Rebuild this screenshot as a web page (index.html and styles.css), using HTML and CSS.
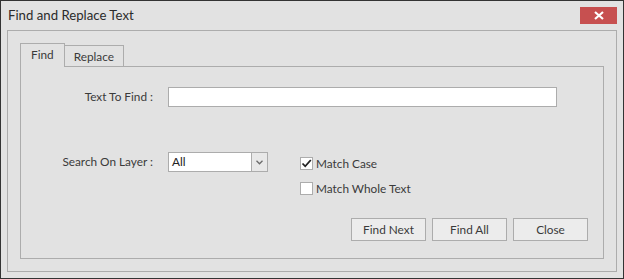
FILE: index.html
```html
<!DOCTYPE html>
<html lang="en">
<head>
  <meta charset="UTF-8">
  <title>Find and Replace Text</title>
  <link rel="stylesheet" href="styles.css">
</head>
<body>
  <div class="window">
    <div class="titlebar">
      <span class="title">Find and Replace Text</span>
      <button class="close-x" aria-label="Close">
        <svg width="10" height="9" viewBox="0 0 10 9"><path d="M1 1 L9 8 M9 1 L1 8" stroke="#fff" stroke-width="2.2"/></svg>
      </button>
    </div>

    <div class="group">
      <div class="tabs">
        <div class="tab active">Find</div>
        <div class="tab">Replace</div>
      </div>
      <div class="page">
        <div class="row row-find">
          <label class="lbl">Text To Find :</label>
          <input class="text-input" type="text">
        </div>

        <div class="row row-layer">
          <label class="lbl">Search On Layer :</label>
          <div class="combo">
            <span class="combo-value">All</span>
            <span class="combo-btn">
              <svg width="7" height="5" viewBox="0 0 7 5"><path d="M0.5 0.8 L3.5 3.8 L6.5 0.8" fill="none" stroke="#6b6b6b" stroke-width="1.3"/></svg>
            </span>
          </div>
          <div class="checks">
            <label class="check">
              <span class="box">
                <svg width="11" height="11" viewBox="0 0 11 11"><path d="M1.5 5.5 L4.2 8.3 L9.8 2" fill="none" stroke="#222" stroke-width="1.8"/></svg>
              </span>
              Match Case
            </label>
            <label class="check">
              <span class="box"></span>
              Match Whole Text
            </label>
          </div>
        </div>

        <div class="buttons">
          <button class="btn">Find Next</button>
          <button class="btn">Find All</button>
          <button class="btn">Close</button>
        </div>
      </div>
    </div>
  </div>
</body>
</html>
```

FILE: styles.css
```css
* { box-sizing: border-box; }
body {
  margin: 0;
  font-family: Lato, 'Noto Sans', sans-serif;
  font-size: 11.8px;
  color: #3a3a3a;
  background: #e2e2e2;
}
.window {
  width: 624px; height: 279px;
  border: 1px solid #333;
  background: #e2e2e2;
  padding: 0 6px 6px;
  display: flex; flex-direction: column;
}
.titlebar {
  height: 29px;
  display: flex; align-items: flex-start; justify-content: space-between;
}
.title {
  font-size: 13.2px; color: #2b2b2b;
  margin: 6px 0 0 1px;
}
.close-x {
  width: 37px; height: 17px; margin-top: 6px; margin-right: 0;
  background: #c75050; border: none; padding: 0;
  display: flex; align-items: center; justify-content: center;
}
.group {
  flex: 1;
  border: 1px solid #acacac;
  padding: 12px 12px 12px;
  display: flex; flex-direction: column;
}
.tabs {
  display: flex; align-items: flex-end;
  height: 23px;
  position: relative; z-index: 1;
}
.tab {
  border: 1px solid #acacac; border-bottom: none;
  height: 21px; padding: 0 9px;
  display: flex; align-items: center;
  background: #e2e2e2;
  color: #3a3a3a;
}
.tab.active {
  height: 24px; margin-bottom: -1px;
  padding: 0 10px 3px 10px;
}
.tab + .tab { border-left: none; }
.page {
  flex: 1;
  border: 1px solid #acacac;
  padding: 20px 15px 0 0;
  display: flex; flex-direction: column;
}
.row { display: flex; align-items: flex-start; }
.lbl {
  width: 132px; text-align: right;
  margin-right: 15px;
  line-height: 20px;
}
.text-input {
  width: 389px; height: 20px;
  border: 1px solid #acacac; background: #fff;
  margin: 0; padding: 0 3px;
  font: inherit;
}
.row-layer { margin-top: 45px; }
.combo {
  width: 100px; height: 20px;
  border: 1px solid #acacac; background: #fff;
  display: flex;
}
.combo-value {
  flex: 1; line-height: 18px; padding-left: 3px; color: #222;
}
.combo-btn {
  width: 16px; border-left: 1px solid #acacac;
  background: #e8e8e8;
  display: flex; align-items: center; justify-content: center;
}
.checks {
  margin-left: 32px; margin-top: 5px;
  display: flex; flex-direction: column; gap: 12px;
}
.check {
  display: flex; align-items: center; gap: 3px;
  height: 13px; line-height: 13px;
}
.box {
  width: 13px; height: 13px;
  border: 1px solid #acacac; background: #fff;
  display: flex; align-items: center; justify-content: center;
}
.buttons {
  margin-top: 23px;
  display: flex; justify-content: flex-end; gap: 6px;
}
.btn {
  width: 75px; height: 23px;
  border: 1px solid #acacac;
  background: #ececec;
  font: inherit; color: #3a3a3a;
  padding: 0;
}
```
